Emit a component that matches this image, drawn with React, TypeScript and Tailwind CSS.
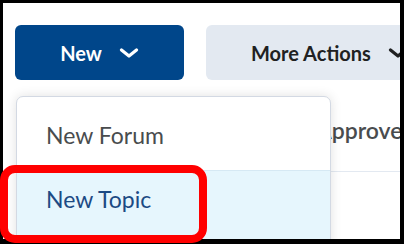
function Chevron({ className }: { className?: string }) {
  return (
    <svg width="20" height="10" viewBox="0 0 20 10" fill="none" className={className}>
      <path
        d="M2.5 2 L10 8 L17.5 2"
        stroke="currentColor"
        strokeWidth="3.2"
        strokeLinecap="round"
        strokeLinejoin="round"
      />
    </svg>
  );
}

export default function App() {
  return (
    <div className="relative w-[404px] h-[244px] overflow-hidden bg-white font-['Lato',sans-serif]">
      {/* framed screenshot */}
      <div className="relative h-full overflow-hidden border-black border-l-[3px] border-t-[3px] border-r-[4px] border-b-[5px]">
        {/* toolbar */}
        <div className="flex gap-[22px] pl-[12px] pt-[22px]">
          <button className="flex h-[55px] w-[169px] shrink-0 items-center justify-center gap-[17px] rounded-[6px] bg-[#00468a] text-[20px] font-bold text-white">
            <span>New</span>
            <Chevron className="mt-[1px]" />
          </button>
          <button className="flex h-[55px] w-[240px] shrink-0 items-center gap-[17px] rounded-[6px] bg-[#e3e9f1] pl-[45px] text-[20px] font-bold text-[#202122]">
            <span>More Actions</span>
            <Chevron className="mt-[1px] text-[#202122]" />
          </button>
        </div>

        {/* content behind the menu */}
        <div className="mt-[36px] border-b border-[#e3e9f1] pb-[27px] pl-[313px]">
          <h3 className="whitespace-nowrap text-[23px] font-semibold leading-[28px] text-[#494c4e]">
            Approve Posts
          </h3>
        </div>

        {/* dropdown menu */}
        <div className="absolute left-[13px] top-[93px] h-[170px] w-[315px] overflow-hidden rounded-[7px] border border-[#d3d9e3] bg-white shadow-[0_0_12px_rgba(0,0,0,0.12)]">
          <div className="h-[73px] pl-[29px] pt-[24px] text-[23px] leading-[28px] text-[#494c4e]">
            New Forum
          </div>
          <div className="h-[96px] border-t border-[#d6e9f4] bg-[#e6f6fd] pl-[29px] pt-[14px] text-[23px] leading-[28px] text-[#1c4a84]">
            New Topic
          </div>
        </div>
      </div>

      {/* annotation highlight */}
      <div className="absolute left-0 top-[165px] z-10 h-[78px] w-[207px] rounded-[15px] border-[8px] border-[#ff0000]" />
    </div>
  );
}
